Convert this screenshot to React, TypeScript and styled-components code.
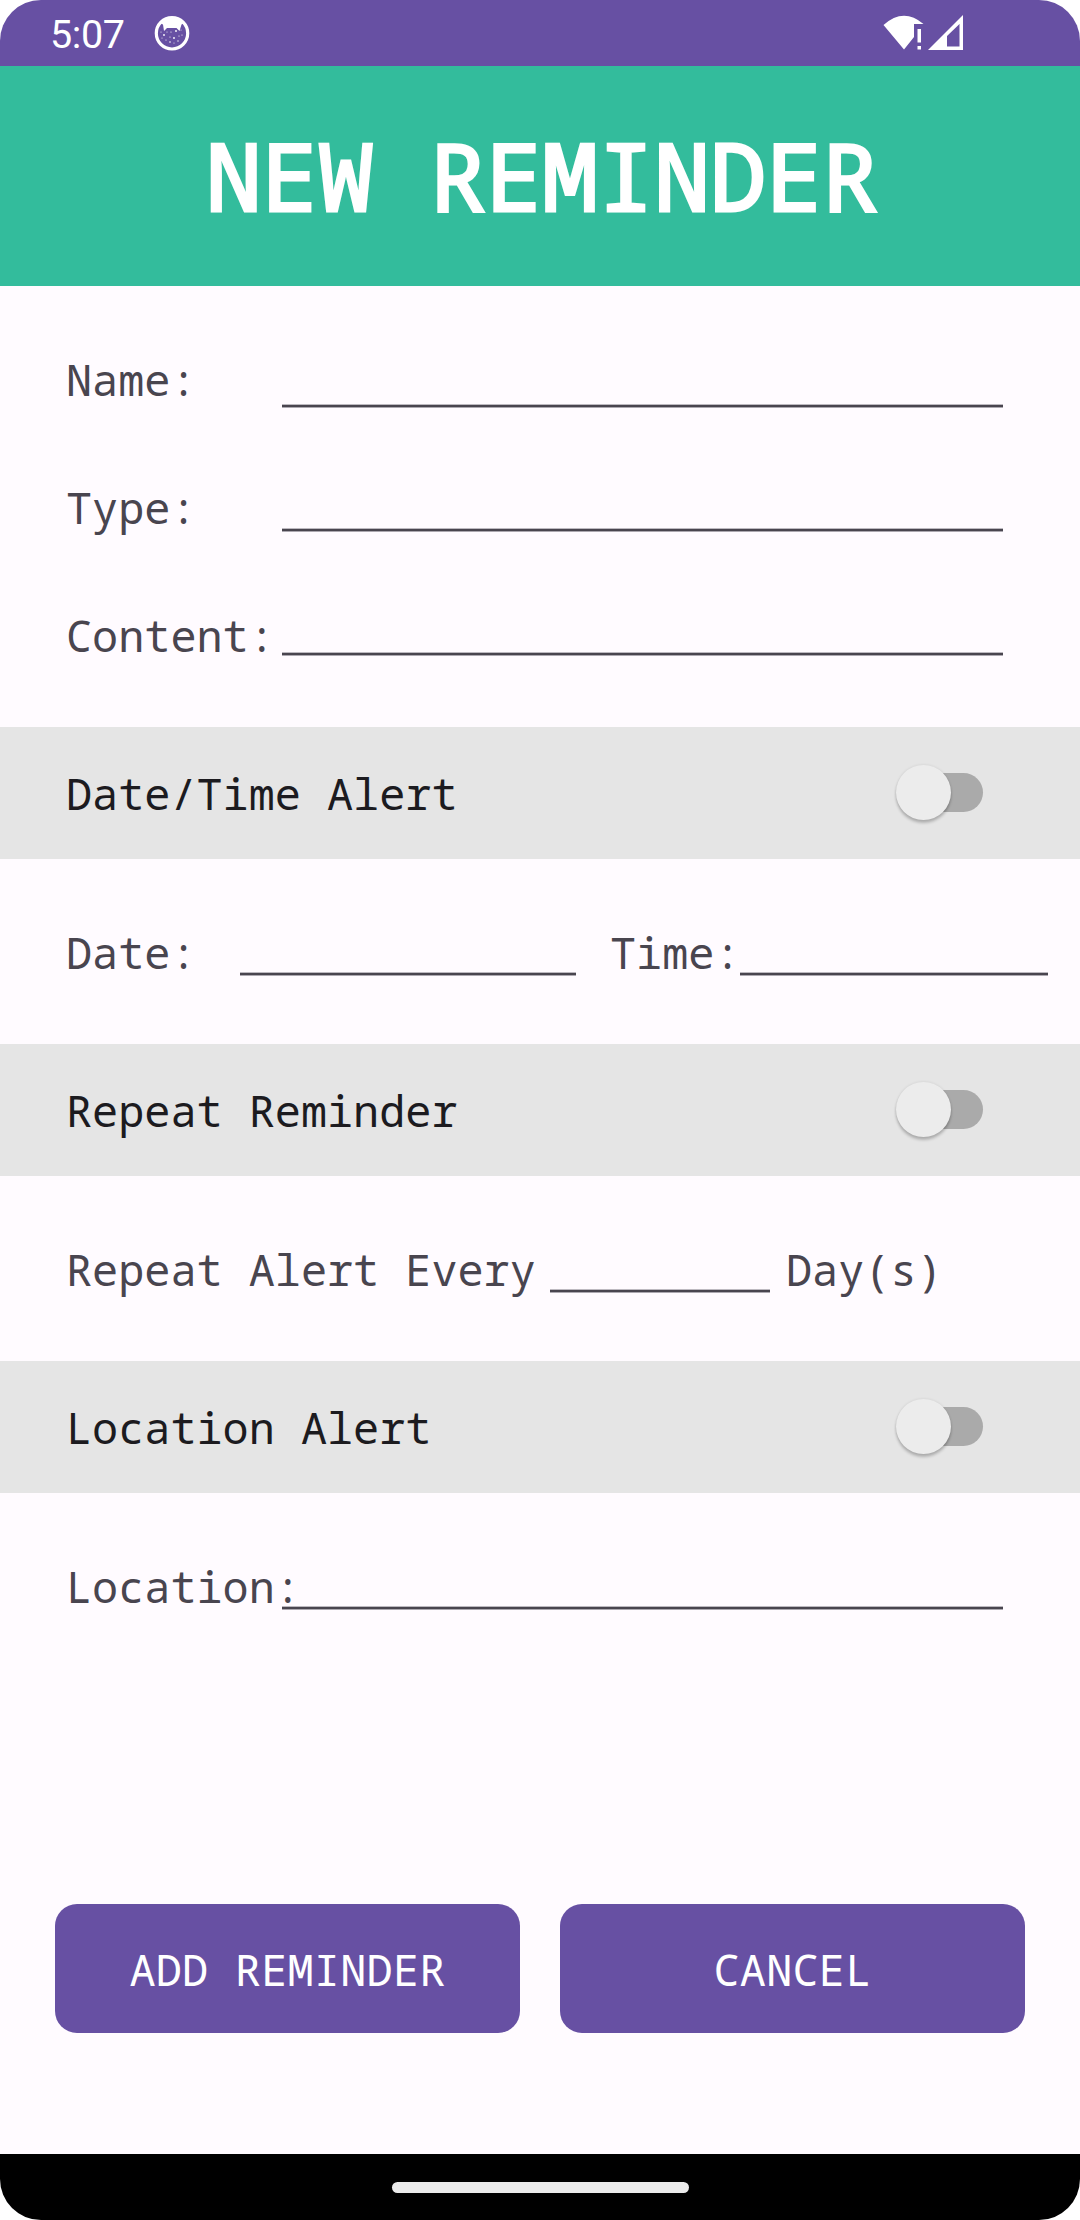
import React, { useState } from "react";
import styled, { createGlobalStyle } from "styled-components";

const GlobalStyle = createGlobalStyle`
  * { box-sizing: border-box; }
  body { margin: 0; background: #fff; }
`;

const mono = `"Noto Sans Mono", "DejaVu Sans Mono", monospace`;

const Screen = styled.div`
  width: 1080px;
  height: 2220px;
  display: flex;
  flex-direction: column;
  overflow: hidden;
  border-radius: 41px;
  background: #fffbff;
  font-family: ${mono};
  font-size: 43.5px;
  line-height: 58px;
  color: #49454f;
`;

const StatusBar = styled.header`
  height: 66px;
  flex: none;
  display: flex;
  justify-content: space-between;
  padding: 0 117px 0 50px;
  background: #6750a3;
  color: #fff;
`;

const StatusGroup = styled.div<{ $gap: number }>`
  display: flex;
  align-items: center;
  gap: ${(p) => p.$gap}px;
`;

const Clock = styled.span`
  font: 39.5px/66px Roboto, sans-serif;
  letter-spacing: -0.4px;
  width: 76px;
  height: 66px;
  padding-top: 2px;
`;

const TitleBar = styled.div`
  height: 220px;
  flex: none;
  padding: 44px 0 0 4px;
  background: #33bc9c;
`;

const Title = styled.h1`
  margin: 0;
  text-align: center;
  font-weight: 400;
  font-size: 93.4px;
  line-height: 130px;
  color: #fff;
  -webkit-text-stroke: 3px #fff;
`;

const Form = styled.main`
  flex: 1;
  display: flex;
  flex-direction: column;
`;

const Details = styled.section`
  display: flex;
  height: 441px;
  padding-left: 66px;
`;

const LabelColumn = styled.div`
  width: 216px;
  display: flex;
  flex-direction: column;
  gap: 70px;
  padding-top: 64px;
`;

const FieldColumn = styled.div`
  width: 721px;
  display: flex;
  flex-direction: column;
  gap: 44px;
  padding-top: 42px;
`;

const Label = styled.label<{ $width?: number }>`
  white-space: pre;
  ${(p) => (p.$width ? `width: ${p.$width}px; flex: none;` : "")}
`;

const Field = styled.input<{ $width?: number }>`
  display: block;
  width: ${(p) => (p.$width ? `${p.$width}px` : "100%")};
  height: 80px;
  flex: none;
  margin: 0;
  padding: 0 8px;
  border: 0;
  border-radius: 0;
  border-bottom: 1px solid #aca8b0;
  box-shadow: inset 0 -2px 0 #49454f, inset 0 -3px 0 #bdb9c0;
  background: transparent;
  outline: none;
  font: inherit;
  color: inherit;
`;

const Band = styled.section`
  height: 132px;
  flex: none;
  display: flex;
  align-items: flex-start;
  justify-content: space-between;
  padding: 37px 97px 0 66px;
  background: #e5e5e5;
  color: #1c1b1f;
`;

const Switch = styled.button`
  display: flex;
  align-items: center;
  width: 87px;
  height: 57px;
  padding: 0;
  border: 0;
  background: none;
`;

const Track = styled.span`
  display: flex;
  align-items: center;
  width: 74px;
  height: 39px;
  margin-left: 13px;
  border-radius: 20px;
  background: #aaa;
`;

const Thumb = styled.span<{ $on: boolean }>`
  width: 55px;
  height: 55px;
  flex: none;
  margin-left: ${(p) => (p.$on ? 20 : -13)}px;
  border-radius: 50%;
  background: #ececec;
  box-shadow: 0 3px 3px rgba(0, 0, 0, 0.22), 0 0 3px rgba(0, 0, 0, 0.1);
`;

const FieldRow = styled.section`
  height: 185px;
  flex: none;
  display: flex;
  align-items: flex-start;
  padding: 64px 0 0 66px;
`;

const RowField = styled(Field)`
  height: 60px;
  margin-top: -7px;
`;

const Spacer = styled.span<{ $width: number }>`
  width: ${(p) => p.$width}px;
  flex: none;
`;

const Actions = styled.div`
  display: flex;
  gap: 40px;
  margin-top: auto;
  padding: 0 55px 121px;
`;

const Action = styled.button`
  flex: 1;
  height: 129px;
  padding: 1px 0 0;
  border: 0;
  border-radius: 22px;
  background: #6750a3;
  color: #fff;
  font: inherit;
  letter-spacing: 0.25px;
`;

const NavBar = styled.footer`
  height: 66px;
  flex: none;
  display: flex;
  align-items: center;
  justify-content: center;
  background: #000;
`;

const HomePill = styled.span`
  width: 297px;
  height: 11px;
  border-radius: 6px;
  background: #ebebeb;
`;

const freckles = [
  [7, 17, 0.5], [10, 20, 0.9], [13, 17, 0.5], [17, 17, 0.6], [22, 16, 0.9], [27, 15, 0.5],
  [28, 20, 0.6], [12, 25, 0.6], [16, 22, 0.6], [20, 23, 0.9], [25, 21, 0.6], [16, 27, 0.8],
  [20, 28, 0.5], [24, 26, 0.7], [8, 23, 0.5],
];

function CatIcon() {
  return (
    <svg width="36" height="36" viewBox="0 0 36 36">
      <circle cx="18" cy="18.3" r="15.7" fill="none" stroke="#fff" strokeWidth="3.2" />
      <path d="M6 8 Q11 2 18 2 Q25 2 30 8 L27.500 9.500 L25.500 16 L22.500 13 H13 L10 16 L9 9.500Z" fill="#fff" />
      {freckles.map(([x, y, r]) => (
        <circle key={`${x}-${y}`} cx={x} cy={y} r={r} fill="#fff" />
      ))}
    </svg>
  );
}

function WifiIcon() {
  return (
    <svg width="42" height="36" viewBox="0 0 42 36">
      <path d="M0.500 10 Q20.500 -8 40.500 9 H31 V22 L21 34.500Z" fill="#fff" />
      <path d="M34.500 14H38V27.500H34.500ZM34.500 31H38V34.500H34.500Z" fill="#fff" />
    </svg>
  );
}

function SignalIcon() {
  return (
    <svg width="35" height="36" viewBox="0 0 35 36">
      <path fillRule="evenodd" d="M0 35L35 0V35ZM19 31.500H31.500V9L19 21Z" fill="#fff" />
    </svg>
  );
}

function AlertBand({ text }: { text: string }) {
  const [on, setOn] = useState(false);
  return (
    <Band>
      <Label>{text}</Label>
      <Switch role="switch" aria-checked={on} aria-label={text} onClick={() => setOn(!on)}>
        <Track>
          <Thumb $on={on} />
        </Track>
      </Switch>
    </Band>
  );
}

export default function App() {
  return (
    <>
      <GlobalStyle />
      <Screen>
        <StatusBar>
          <StatusGroup $gap={27.5}>
            <Clock>5:07</Clock>
            <CatIcon />
          </StatusGroup>
          <StatusGroup $gap={3}>
            <WifiIcon />
            <SignalIcon />
          </StatusGroup>
        </StatusBar>
        <TitleBar>
          <Title>NEW REMINDER</Title>
        </TitleBar>
        <Form>
          <Details>
            <LabelColumn>
              <Label htmlFor="name">Name:</Label>
              <Label htmlFor="type">Type:</Label>
              <Label htmlFor="content">Content:</Label>
            </LabelColumn>
            <FieldColumn>
              <Field id="name" />
              <Field id="type" />
              <Field id="content" />
            </FieldColumn>
          </Details>
          <AlertBand text="Date/Time Alert" />
          <FieldRow>
            <Label $width={174}>Date:</Label>
            <RowField $width={336} />
            <Spacer $width={34} />
            <Label $width={130}>Time:</Label>
            <RowField $width={308} />
          </FieldRow>
          <AlertBand text="Repeat Reminder" />
          <FieldRow>
            <Label $width={484}>Repeat Alert Every</Label>
            <RowField $width={220} />
            <Spacer $width={16} />
            <Label>Day(s)</Label>
          </FieldRow>
          <AlertBand text="Location Alert" />
          <FieldRow>
            <Label $width={216}>Location:</Label>
            <RowField $width={721} />
          </FieldRow>
          <Actions>
            <Action>ADD REMINDER</Action>
            <Action>CANCEL</Action>
          </Actions>
        </Form>
        <NavBar>
          <HomePill />
        </NavBar>
      </Screen>
    </>
  );
}
